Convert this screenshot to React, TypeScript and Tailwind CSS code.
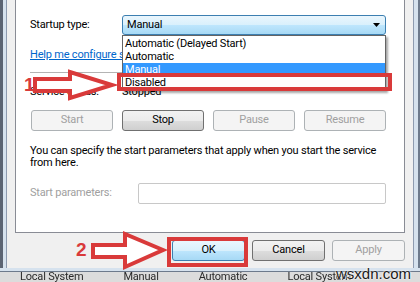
export default function App() {
  const red = "#d93a3a";
  const btnBase = "h-[21px] rounded-[3px] flex items-center justify-center border";
  const btnEnabled =
    btnBase +
    " border-[#707070] text-black bg-[linear-gradient(to_bottom,#f2f2f2_0%,#ebebeb_50%,#dddddd_51%,#cfcfcf_100%)]";
  const btnDisabled = btnBase + " border-[#adb2b5] text-[#a0a0a0] bg-[#f4f4f4]";
  const btnDefault =
    btnBase +
    " border-[#3c7fb1] text-black bg-[linear-gradient(to_bottom,#eaf6fd_0%,#d9f0fc_50%,#bee6fd_51%,#a7d9f5_100%)]";

  return (
    <div className="relative w-[420px] h-[282px] overflow-hidden bg-[#e6e6e6] font-['Roboto','Liberation_Sans',Arial,sans-serif] text-[11px] tracking-[-0.2px] text-black">
      <div className="flex h-[268px]">
        {/* left frame */}
        <div className="flex">
          <div className="w-[3px] bg-[#5b6473]" />
          <div className="w-[3px] bg-[#d6e2ee]" />
          <div className="w-[1px] bg-[#8e9bb0]" />
        </div>

        {/* dialog body */}
        <div className="flex-1 bg-[#f0f0f0] flex flex-col">
          <div className="mx-[8px] h-[233px] bg-white border-x border-b border-[#898c95] flex flex-col pl-[14px] pr-[18px]">
            <div className="mt-[15px] h-[20px] flex items-center">
              <span className="w-[92px]">Startup type:</span>
              <div className="flex-1 h-[20px] rounded-[3px] border border-[#3c7fb1] bg-[linear-gradient(to_bottom,#eaf6fd_0%,#d9f0fc_50%,#bee6fd_51%,#a7d9f5_100%)] flex items-center pl-[4px] pr-[5px]">
                <span className="flex-1">Manual</span>
                <svg width="7" height="4" viewBox="0 0 7 4">
                  <path d="M0 0 H7 L3.5 4 Z" fill="#000" />
                </svg>
              </div>
            </div>

            <div className="mt-[13px] h-[14px] leading-[14px] whitespace-nowrap text-[#0066cc] underline">
              Help me configure service recovery options.
            </div>

            <div className="mt-[10px] h-px bg-[#b4b4b4]" />

            <div className="mt-[12px] h-[14px] leading-[14px] flex">
              <span className="w-[92px]">Service status:</span>
              <span>Stopped</span>
            </div>

            <div className="mt-[11px] flex gap-[9px] pl-[1px]">
              <div className={btnDisabled + " w-[82px]"}>Start</div>
              <div className={btnEnabled + " w-[82px]"}>Stop</div>
              <div className={btnDisabled + " w-[82px]"}>Pause</div>
              <div className={btnDisabled + " w-[82px]"}>Resume</div>
            </div>

            <div className="mt-[14px] leading-[12px] whitespace-nowrap">
              You can specify the start parameters that apply when you start the service
              <br />
              from here.
            </div>

            <div className="mt-[14px] h-[21px] flex items-center">
              <span className="w-[108px] text-[#a0a0a0]">Start parameters:</span>
              <div className="w-[248px] h-[21px] rounded-[2px] border border-[#c8c8c8] bg-white" />
            </div>
          </div>

          <div className="flex justify-end gap-[7px] pr-[8px] pt-[7px]">
            <div className={btnDefault + " w-[73px]"}>OK</div>
            <div className={btnEnabled + " w-[73px]"}>Cancel</div>
            <div className={btnDisabled + " w-[73px]"}>Apply</div>
          </div>
        </div>

        {/* right frame */}
        <div className="flex">
          <div className="w-[1px] bg-[#8e9bb0]" />
          <div className="w-[4px] bg-[#d6e2ee]" />
          <div className="w-[2px] bg-[#6d7a8c]" />
        </div>
      </div>

      {/* bottom frame */}
      <div className="h-[3px] bg-[#d6e2ee]" />
      <div className="h-[1px] bg-[#6d7a8c]" />
      <div className="h-[10px] bg-[#dcdcdc] flex gap-[40px] pl-[20px] text-[#2a2a2a] text-[11px] leading-[10px] whitespace-nowrap blur-[0.4px]">
        <span>Local System</span>
        <span>Manual</span>
        <span>Automatic</span>
        <span>Local System</span>
      </div>

      {/* dropdown list overlay */}
      <div className="absolute left-[122px] top-[35px] w-[264px] h-[56px] bg-white border border-[#646464] shadow-[2px_2px_2px_rgba(0,0,0,0.35)] pt-[1px] flex flex-col">
        <div className="h-[13px] leading-[13px] pl-[2px]">Automatic (Delayed Start)</div>
        <div className="h-[13px] leading-[13px] pl-[2px]">Automatic</div>
        <div className="h-[13px] leading-[13px] pl-[2px] bg-[#3399ff] text-white">Manual</div>
        <div className="h-[13px] leading-[13px] pl-[2px]">Disabled</div>
      </div>

      {/* annotations */}
      <svg className="absolute left-0 top-0" width="420" height="282" viewBox="0 0 420 282">
        <polygon
          points="35,79 70,79 70,72 112,85 70,98 70,91 35,91"
          fill="#ffffff"
          stroke={red}
          strokeWidth="4"
          strokeLinejoin="miter"
        />
        <polygon
          points="93,245 125,245 125,234 163,250 125,267 125,257 93,257"
          fill="#ffffff"
          stroke={red}
          strokeWidth="4"
          strokeLinejoin="miter"
        />
      </svg>
      <div className="absolute left-[117px] top-[73px] w-[275px] h-[18px] border-4 border-[#d93a3a]" />
      <div className="absolute left-[167px] top-[237px] w-[81px] h-[30px] border-4 border-[#d93a3a]" />
      <div className="absolute left-[24px] top-[75px] font-['Liberation_Sans',Arial,sans-serif] tracking-normal text-[19px] leading-[19px] font-bold text-[#d93a3a]">1</div>
      <div className="absolute left-[76px] top-[240px] font-['Liberation_Sans',Arial,sans-serif] tracking-normal text-[19px] leading-[19px] font-bold text-[#d93a3a]">2</div>

      <div className="absolute right-[9px] top-[266px] font-['Liberation_Sans',Arial,sans-serif] tracking-normal text-[15px] leading-[16px] text-[#1a1a1a] [text-shadow:0_0_2px_#ffffff,0_0_2px_#ffffff]">
        wsxdn.com
      </div>
    </div>
  );
}
